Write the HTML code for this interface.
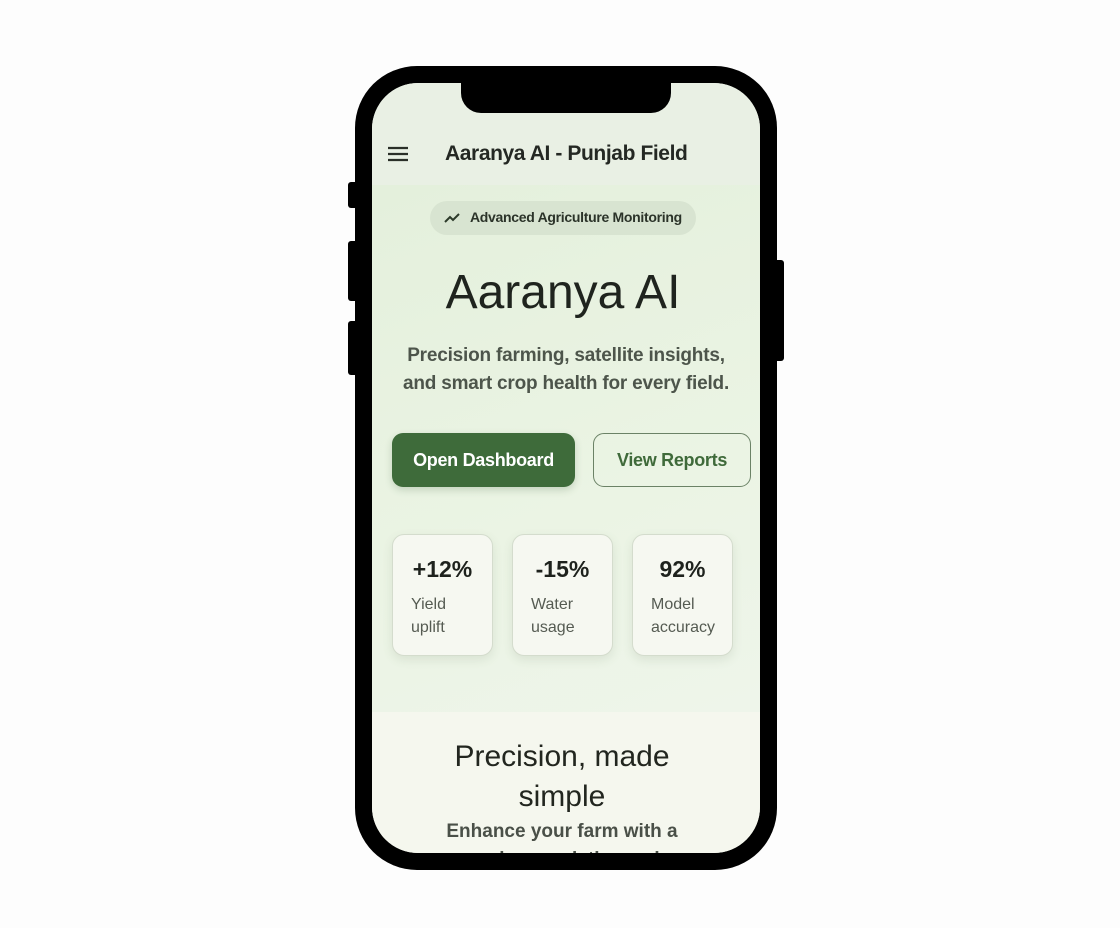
<!DOCTYPE html>
<html><head><style>
*{margin:0;padding:0;box-sizing:border-box}
body{width:1120px;height:928px;background:#fdfdfd;position:relative;overflow:hidden;font-family:"Liberation Sans",sans-serif}
.a{position:absolute}
.phone{left:355px;top:66px;width:422px;height:804px;background:#000;border-radius:62px}
.screen{left:372px;top:83px;width:388px;height:770px;border-radius:46px;overflow:hidden;background:#eef3e8}
.btn{background:#000;border-radius:3px}
.t{position:absolute;width:100%;text-align:center;white-space:nowrap}
.card{position:absolute;top:451px;width:101px;height:122px;background:#f6f8f1;border:1px solid #d4dccd;border-radius:12px;box-shadow:0 4px 10px rgba(80,110,70,.12)}
.card b{position:absolute;left:0;width:100%;text-align:center;top:21px;font-size:23px;color:#1e221d}
.card span{position:absolute;left:18px;top:58px;font-size:16px;line-height:23px;color:#555b52}
</style></head><body>
<div class="a btn" style="left:348px;top:182px;width:10px;height:26px"></div>
<div class="a btn" style="left:348px;top:241px;width:10px;height:60px"></div>
<div class="a btn" style="left:348px;top:321px;width:10px;height:54px"></div>
<div class="a btn" style="left:774px;top:260px;width:10px;height:101px"></div>
<div class="a phone"></div>
<div class="a screen">
  <div class="a" style="left:0;top:0;width:388px;height:102px;background:#e9f0e4"></div>
  <div class="a" style="left:0;top:102px;width:388px;height:527px;background:linear-gradient(160deg,#e4f0dc,#ebf4e4 60%,#eef5ea)"></div>
  <div class="a" style="left:0;top:629px;width:388px;height:141px;background:#f5f7ee"></div>
  <div class="a" style="left:89px;top:0;width:210px;height:30px;background:#000;border-radius:0 0 20px 20px"></div>
  <svg class="a" style="left:15px;top:63px" width="22" height="16"><path d="M1 2h20M1 8h20M1 14h20" stroke="#2a2f28" stroke-width="2.2"/></svg>
  <div class="a" style="left:73px;top:59px;font-size:21px;font-weight:bold;color:#242823;letter-spacing:-0.4px">Aaranya AI - Punjab Field</div>
  <div class="a" style="left:58px;top:118px;width:266px;height:34px;border-radius:17px;background:#d8e4d1"></div>
  <svg class="a" style="left:72px;top:128px" width="17" height="14"><path d="M1 11 L6 6 L9 9 L15 3" stroke="#2c3a2a" stroke-width="2" fill="none"/></svg>
  <div class="a" style="left:98px;top:126px;font-size:14px;font-weight:bold;color:#2b3329;letter-spacing:-0.3px">Advanced Agriculture Monitoring</div>
  <div class="t" style="top:182px;font-size:48px;color:#1f241e;letter-spacing:0px;left:-3px">Aaranya AI</div>
  <div class="t" style="top:259px;font-size:19px;line-height:28px;font-weight:bold;color:#4d554b;letter-spacing:-0.2px">Precision farming, satellite insights,<br>and smart crop health for every field.</div>
  <div class="a" style="left:20px;top:350px;width:183px;height:54px;background:#3e6b3a;border-radius:11px;box-shadow:0 3px 8px rgba(40,80,40,.2);color:#fff;font-size:18px;font-weight:bold;text-align:center;line-height:54px;letter-spacing:-0.3px">Open Dashboard</div>
  <div class="a" style="left:221px;top:350px;width:158px;height:54px;border:1.5px solid #6b8266;border-radius:11px;color:#3f6a3a;font-size:18px;font-weight:bold;text-align:center;line-height:53px;letter-spacing:-0.3px">View Reports</div>
  <div class="card" style="left:20px"><b>+12%</b><span>Yield<br>uplift</span></div>
  <div class="card" style="left:140px"><b>-15%</b><span>Water<br>usage</span></div>
  <div class="card" style="left:260px"><b>92%</b><span>Model<br>accuracy</span></div>
  <div class="t" style="top:654px;font-size:30px;line-height:40px;color:#22261f;left:-4px">Precision, made<br>simple</div>
  <div class="t" style="top:735px;font-size:19px;line-height:28px;font-weight:bold;color:#4a5048;left:-4px">Enhance your farm with a<br>modern analytics and</div>
</div>
</body></html>
